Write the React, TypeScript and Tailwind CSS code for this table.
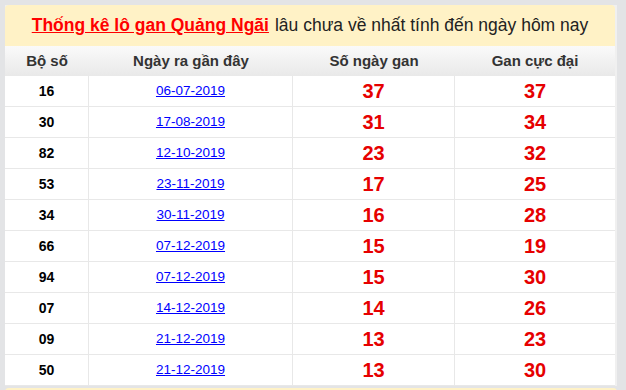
const rows = [
  { bo: "16", date: "06-07-2019", gan: 37, max: 37 },
  { bo: "30", date: "17-08-2019", gan: 31, max: 34 },
  { bo: "82", date: "12-10-2019", gan: 23, max: 32 },
  { bo: "53", date: "23-11-2019", gan: 17, max: 25 },
  { bo: "34", date: "30-11-2019", gan: 16, max: 28 },
  { bo: "66", date: "07-12-2019", gan: 15, max: 19 },
  { bo: "94", date: "07-12-2019", gan: 15, max: 30 },
  { bo: "07", date: "14-12-2019", gan: 14, max: 26 },
  { bo: "09", date: "21-12-2019", gan: 13, max: 23 },
  { bo: "50", date: "21-12-2019", gan: 13, max: 30 },
];

const cols = "grid grid-cols-[84px_204px_162px_160px]";

export default function App() {
  return (
    <div className="min-h-[390px] w-[626px] overflow-hidden bg-[#e3e4e6] pl-[5px] pt-[5px] font-['Liberation_Sans',Arial,sans-serif]">
      <div className="w-[612px] bg-[#f0f0f0] pr-[2px]">
        {/* title */}
        <div className="flex h-[41px] items-center justify-center rounded-t-[4px] bg-[#fff2c6] text-[17.5px] text-[#222]">
          <a href="#" className="mr-[6px] font-bold text-[#f00] underline">
            Thống kê lô gan Quảng Ngãi
          </a>
          <span>lâu chưa về nhất tính đến ngày hôm nay</span>
        </div>

        {/* header */}
        <div className={`${cols} h-[30px] bg-gradient-to-b from-[#fafafa] to-[#e9e9e9] text-[15px] font-bold text-[#333]`}>
          <div className="flex items-center justify-center">Bộ số</div>
          <div className="flex items-center justify-center">Ngày ra gần đây</div>
          <div className="flex items-center justify-center">Số ngày gan</div>
          <div className="flex items-center justify-center">Gan cực đại</div>
        </div>

        {rows.map((r, i) => (
          <div key={i} className={`${cols} h-[31px] border-b border-[#e8e8e8] bg-white`}>
            <div className="flex items-center justify-center border-r border-[#e8e8e8] text-[14px] font-bold text-black">
              {r.bo}
            </div>
            <div className="flex items-center justify-center border-r border-[#e8e8e8]">
              <a href="#" className="text-[13.5px] text-[#0000ff] underline">
                {r.date}
              </a>
            </div>
            <div className="flex items-center justify-center border-r border-[#e8e8e8] text-[20px] font-bold text-[#e60000]">
              {r.gan}
            </div>
            <div className="flex items-center justify-center text-[20px] font-bold text-[#e60000]">
              {r.max}
            </div>
          </div>
        ))}
      </div>
      <div className="mt-[2px] h-[20px] w-[612px] rounded-t-[4px] bg-[#fff2c6]" />
    </div>
  );
}
